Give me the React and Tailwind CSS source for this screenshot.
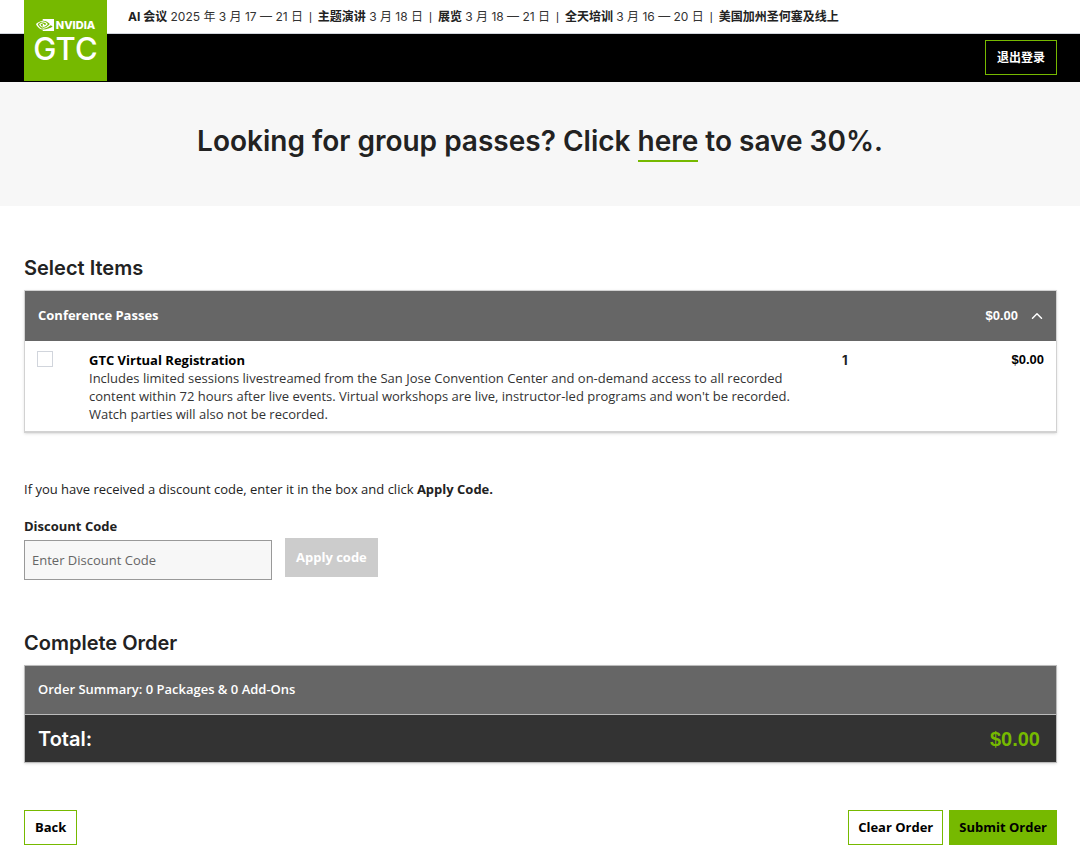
import React, { useState } from "react";
import { FiChevronDown, FiChevronUp } from "react-icons/fi";
import { SiNvidia } from "react-icons/si";

const dates = [
  { label: "AI 会议", value: "2025 年 3 月 17 — 21 日" },
  { label: "主题演讲", value: "3 月 18 日" },
  { label: "展览", value: "3 月 18 — 21 日" },
  { label: "全天培训", value: "3 月 16 — 20 日" },
  { label: "美国加州圣何塞及线上" },
];

const Logo = () => (
  <a
    href="#"
    aria-label="NVIDIA GTC"
    className="absolute left-6 top-0 flex h-[81px] w-[83px] flex-col items-center bg-[#76b900] pt-[19px] text-white"
  >
    <span className="flex h-3 items-center gap-[2px]">
      <SiNvidia className="h-[18px] w-[18px]" />
      <span className="text-[11px] font-extrabold leading-3">NVIDIA</span>
    </span>
    <span className="text-[31px] font-medium leading-9">GTC</span>
  </a>
);

const Header = () => (
  <header className="relative">
    <div className="flex h-[34px] items-center border-b border-gray-300 pl-32 text-xs">
      {dates.map((date, i) => (
        <span key={date.label} className="whitespace-pre">
          {i > 0 && (
            <span className="font-['Roboto',sans-serif]">{"  |  "}</span>
          )}
          <strong className="font-bold">{date.label}</strong>
          {date.value && <span className="text-[#333]"> {date.value}</span>}
        </span>
      ))}
    </div>
    <div className="flex h-12 items-start justify-end bg-black pr-[23px] pt-[6px]">
      <button className="h-[35px] border border-[#76b900] px-[11px] text-xs font-bold text-white">
        退出登录
      </button>
    </div>
    <Logo />
  </header>
);

const PassList = () => {
  const [open, setOpen] = useState(true);
  return (
    <section className="border border-b-2 border-[#d2d2d2] shadow-sm">
      <button
        onClick={() => setOpen(!open)}
        aria-expanded={open}
        className="flex h-[50px] w-full items-center bg-[#666] pl-[13px] pr-[10px] text-[13px] font-bold text-white"
      >
        <span className="flex-1 text-left font-['Open_Sans',sans-serif]">
          Conference Passes
        </span>
        <span className="mr-[10px] font-['Liberation_Sans',sans-serif]">
          $0.00
        </span>
        {open ? <FiChevronUp size={18} /> : <FiChevronDown size={18} />}
      </button>
      {open && (
        <div className="flex items-start px-3 pb-2 pt-[10px] text-[13px] leading-[18px]">
          <input
            id="virtual"
            type="checkbox"
            className="h-4 w-4 appearance-none border border-gray-300 bg-white checked:bg-[#76b900]"
          />
          <div className="ml-9 w-[71%] font-['Open_Sans',sans-serif]">
            <label htmlFor="virtual" className="block font-bold text-black">
              GTC Virtual Registration
            </label>
            <p className="text-[#333]">
              Includes limited sessions livestreamed from the San Jose
              Convention Center and on-demand access to all recorded content
              within 72 hours after live events. Virtual workshops are live,
              instructor-led programs and won't be recorded. Watch parties will
              also not be recorded.
            </p>
          </div>
          <span className="ml-[38px] font-bold">1</span>
          <span className="ml-auto font-['Liberation_Sans',sans-serif] font-bold text-black">
            $0.00
          </span>
        </div>
      )}
    </section>
  );
};

const DiscountForm = () => (
  <form
    onSubmit={(e) => e.preventDefault()}
    className="mt-[47px] font-['Open_Sans',sans-serif] text-[13px]"
  >
    <p className="leading-[18px]">
      If you have received a discount code, enter it in the box and click{" "}
      <strong className="font-bold">Apply Code.</strong>
    </p>
    <label htmlFor="code" className="mt-[19px] block font-bold leading-[18px]">
      Discount Code
    </label>
    <div className="mt-[3px] flex items-start">
      <input
        id="code"
        type="text"
        placeholder="Enter Discount Code"
        className="mt-[2px] h-10 w-[248px] border border-[#999] bg-[#f7f7f7] px-[7px] placeholder:text-[#666]"
      />
      <button
        disabled
        className="ml-[13px] h-[39px] bg-[#ccc] px-[11px] font-bold text-white"
      >
        Apply code
      </button>
    </div>
  </form>
);

const OrderSummary = () => (
  <section className="border border-[#bbb] text-white shadow-sm">
    <div className="flex h-[49px] items-center border-b border-[#bbb] bg-[#666] px-[13px] font-['Open_Sans',sans-serif] text-[13px] font-semibold">
      Order Summary: 0 Packages &amp; 0 Add-Ons
    </div>
    <div className="flex h-[47px] items-center justify-between bg-[#333] pl-[13px] pr-4 text-xl font-semibold">
      <span>Total:</span>
      <span className="font-['Liberation_Sans',sans-serif] text-[#76b900]">
        $0.00
      </span>
    </div>
  </section>
);

const App = () => {
  return (
    <div className="bg-white font-['Inter','Noto_Sans_CJK_SC',sans-serif] text-[#222]">
      <Header />
      <div className="bg-[#f7f7f7] px-6 pb-11 pt-10 text-center">
        <h1 className="text-[28px] font-semibold leading-[38px]">
          Looking for group passes? Click{" "}
          <a href="#" className="inline-block border-b-2 border-[#76b900]">
            here
          </a>{" "}
          to save 30%.
        </h1>
      </div>
      <main className="pb-2 pl-6 pr-[23px] pt-12">
        <h2 className="mb-2 text-xl font-semibold">Select Items</h2>
        <PassList />
        <DiscountForm />
        <h2 className="mb-2 mt-[49px] text-xl font-semibold">Complete Order</h2>
        <OrderSummary />
        <div className="mt-[47px] flex gap-[6px] font-['Open_Sans',sans-serif] text-[13px] font-bold text-black">
          <button className="mr-auto h-[35px] border border-[#76b900] px-[10px]">
            Back
          </button>
          <button className="h-[35px] border border-[#76b900] px-[9px]">
            Clear Order
          </button>
          <button className="h-[35px] border border-[#76b900] bg-[#76b900] px-[9px]">
            Submit Order
          </button>
        </div>
      </main>
    </div>
  );
};

export default App;
